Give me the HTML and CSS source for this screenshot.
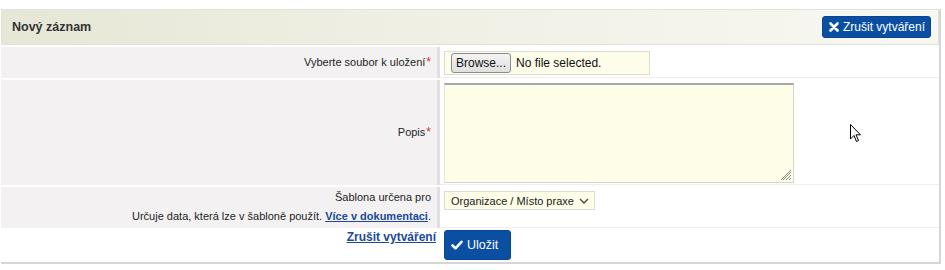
FILE: index.html
```html
<!DOCTYPE html>
<html lang="cs">
<head>
<meta charset="utf-8">
<title>Nový záznam</title>
<link rel="stylesheet" href="styles.css">
</head>
<body>
<div class="panel">
  <div class="panel-head">
    <h2 class="title">Nový záznam</h2>
    <a class="btn btn-head" href="#"><svg class="ico" viewBox="0 0 10 10" width="10" height="10"><path d="M1.5 1.5 L8.5 8.5 M8.5 1.5 L1.5 8.5" stroke="#fff" stroke-width="2.6" stroke-linecap="round"/></svg>Zrušit vytváření</a>
  </div>
  <table class="form">
    <tr class="r1">
      <th class="lbl">Vyberte soubor k uložení<span class="req">*</span></th>
      <td class="fld"><div class="file"><span class="browse">Browse...</span><span class="nofile">No file selected.</span></div></td>
    </tr>
    <tr class="r2">
      <th class="lbl">Popis<span class="req">*</span></th>
      <td class="fld"><div class="area"><svg class="grip" viewBox="0 0 12 12" width="12" height="12"><path d="M11 3 L3 11 M11 6 L6 11 M11 9 L9 11 M11 1 L1 11" stroke="#888" stroke-width="1"/></svg></div></td>
    </tr>
    <tr class="r3">
      <th class="lbl"><div>Šablona určena pro</div><div>Určuje data, která lze v šabloně použít. <a class="link" href="#">Více v dokumentaci</a>.</div></th>
      <td class="fld"><div class="select"><span>Organizace / Místo praxe</span><svg viewBox="0 0 10 6" width="10" height="6"><path d="M1 1 L5 5 L9 1" fill="none" stroke="#444" stroke-width="1.3"/></svg></div></td>
    </tr>
    <tr class="r4">
      <th class="act"><a class="link" href="#">Zrušit vytváření</a></th>
      <td class="fldb"><a class="btn btn-save" href="#"><svg class="ico" viewBox="0 0 12 10" width="12" height="10"><path d="M1.5 5.5 L4.5 8.3 L10.5 1.8" fill="none" stroke="#fff" stroke-width="2.6" stroke-linecap="round" stroke-linejoin="round"/></svg>Uložit</a></td>
    </tr>
  </table>
  <svg class="cursor" viewBox="0 0 12 19" width="12" height="19"><path d="M0.5 0.5 L0.5 15 L4 11.5 L6.5 17.5 L8.5 16.5 L6 10.8 L10.5 10.8 Z" fill="#fff" stroke="#000" stroke-width="1"/></svg>
</div>
</body>
</html>
```
FILE: styles.css
```css
html, body { margin: 0; padding: 0; background: #fff; }
body {
  padding: 9px 0 0 1px;
  font-family: "Liberation Sans", Arial, sans-serif;
  font-size: 11px;
  color: #1e1e1e;
}
.panel {
  position: relative;
  width: 938px;
  border-right: 2px solid #d6d6d6;
  border-bottom: 2px solid #d6d6d6;
}
.panel-head {
  display: flex;
  align-items: center;
  justify-content: space-between;
  height: 34px;
  padding: 0 7px 0 10px;
  border: 1px solid #e2e2d8;
  background: linear-gradient(to right, #e7e7d7 0%, #f1f1e7 55%, #f8f8f3 100%);
}
.title {
  margin: 0;
  font-size: 12.5px;
  font-weight: bold;
  color: #333;
}
.btn {
  display: inline-flex;
  align-items: center;
  gap: 4px;
  background: #0b4fa3;
  color: #fff;
  text-decoration: none;
  border-radius: 3px;
  border: 1px solid #0a4592;
}
.btn-head {
  height: 20px;
  padding: 0 5px 0 6px;
  font-size: 12px;
}
.form {
  width: 100%;
  border-collapse: separate;
  border-spacing: 0 2px;
}
.form th, .form td { padding: 0; }
.lbl {
  width: 430px;
  background: #f3f1f1;
  border-right: 3px solid #e1dfdf;
  text-align: right;
  font-weight: normal;
  padding-right: 6px !important;
  vertical-align: middle;
  line-height: 19px;
}
.req { color: #cc3333; font-size: 12px; margin-left: 1px; }
.fld {
  vertical-align: top;
  padding: 4px 0 2px 4px !important;
  border-bottom: 1px solid #efefef;
}
.r2 .fld { padding: 3px 0 1px 4px !important; }
.file {
  display: flex;
  align-items: center;
  width: 204px;
  height: 22px;
  border: 1px solid #dcdcd0;
  background: #fdfde9;
  font-size: 12px;
}
.browse {
  margin-left: 6px;
  height: 18px;
  line-height: 18px;
  padding: 0 4px;
  border: 1px solid #8c8c8c;
  border-radius: 3px;
  background: linear-gradient(#f4f4f4, #e0e0e0);
  color: #111;
}
.nofile { margin-left: 5px; color: #111; }
.area {
  position: relative;
  width: 348px;
  height: 97px;
  border: 1px solid #d4d4d4;
  border-top: 2px solid #a8a8a8;
  border-left-color: #e6e6d0;
  background: #fdfde8;
}
.grip { position: absolute; right: 1px; bottom: 1px; }
.r3 .lbl { padding-top: 1px !important; padding-bottom: 2px !important; }
.select {
  display: flex;
  align-items: center;
  justify-content: space-between;
  box-sizing: border-box;
  width: 151px;
  height: 19px;
  padding: 0 5px 0 6px;
  border: 1px solid #dcdcd0;
  background: #fdfde8;
  font-size: 11px;
  white-space: nowrap;
  color: #222;
}
.link {
  color: #1a4a9a;
  font-weight: bold;
  text-decoration: underline;
}
.act {
  text-align: right;
  vertical-align: top;
  padding: 0 4px 0 0 !important;
  font-size: 12px;
  line-height: 14px;
}
.fldb { vertical-align: top; padding: 0 0 0 4px !important; }
.btn-save {
  height: 28px;
  padding: 0 12px 0 6px;
  font-size: 12.5px;
}
.cursor { position: absolute; left: 849px; top: 115px; }
```
